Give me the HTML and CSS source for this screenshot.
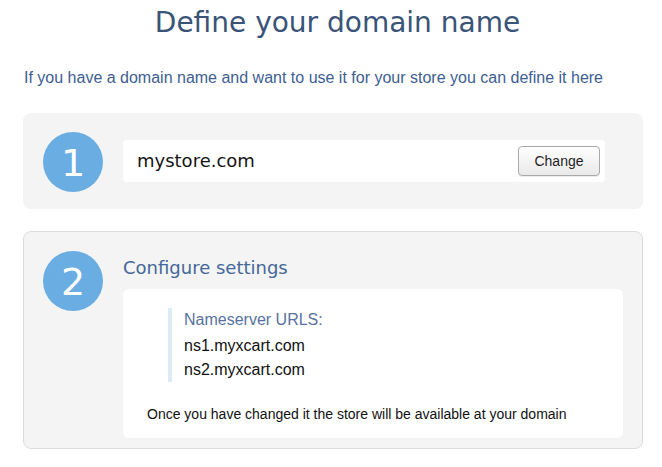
FILE: index.html
```html
<!DOCTYPE html>
<html lang="en">
<head>
<meta charset="utf-8">
<title>Define your domain name</title>
<link rel="stylesheet" href="styles.css">
</head>
<body>
<div class="page">
  <h1 class="title">Define your domain name</h1>
  <p class="lead">If you have a domain name and want to use it for your store you can define it here</p>

  <section class="step step-plain">
    <div class="num">1</div>
    <div class="domain">
      <span class="domain-name">mystore.com</span>
      <button class="btn" type="button">Change</button>
    </div>
  </section>

  <section class="step step-bordered">
    <div class="num">2</div>
    <div class="step-body">
      <h2 class="step-title">Configure settings</h2>
      <div class="panel">
        <div class="quote">
          <div class="quote-head">Nameserver URLS:</div>
          <div class="quote-line">ns1.myxcart.com</div>
          <div class="quote-line">ns2.myxcart.com</div>
        </div>
        <p class="note">Once you have changed it the store will be available at your domain</p>
      </div>
    </div>
  </section>
</div>
</body>
</html>
```

FILE: styles.css
```css
html, body {
  margin: 0;
  padding: 0;
  background: #ffffff;
}

.page {
  width: 620px;
  margin-left: 23px;
  font-family: "Liberation Sans", Arial, sans-serif;
}

.title {
  margin: 6px 0 0 0;
  padding-left: 9px;
  text-align: center;
  font-family: "DejaVu Sans", Verdana, sans-serif;
  font-weight: normal;
  font-size: 28px;
  line-height: 34px;
  color: #3a5478;
}

.lead {
  margin: 28px 0 0 1px;
  font-size: 16px;
  line-height: 20px;
  color: #3e5e92;
}

.step {
  display: flex;
  background: #f4f4f4;
  border-radius: 8px;
  box-sizing: border-box;
}

.step-plain {
  margin-top: 25px;
  height: 96px;
  padding: 0 38px 0 20px;
  align-items: center;
}

.step-bordered {
  margin-top: 22px;
  border: 1px solid #dcdcdc;
  padding: 19px 19px 10px 19px;
  align-items: flex-start;
}

.num {
  flex: 0 0 60px;
  width: 60px;
  height: 60px;
  border-radius: 50%;
  background: #6aade2;
  color: #ffffff;
  font-family: "DejaVu Sans", Verdana, sans-serif;
  font-size: 38px;
  line-height: 62px;
  text-align: center;
  margin-right: 20px;
}

.step-plain .num {
  margin-top: 1px;
}

.domain {
  flex: 1;
  display: flex;
  align-items: center;
  justify-content: space-between;
  height: 42px;
  background: #ffffff;
  border-radius: 4px;
  padding: 0 5px 0 14px;
}

.domain-name {
  font-family: "DejaVu Sans", Verdana, sans-serif;
  font-size: 18px;
  line-height: 42px;
  color: #141414;
}

.btn {
  width: 82px;
  height: 30px;
  padding: 0;
  border: 1px solid #a9a9a9;
  border-radius: 4px;
  background: linear-gradient(#ffffff, #e9e9e9);
  box-shadow: 0 1px 1px rgba(0, 0, 0, 0.08);
  font-family: "Liberation Sans", Arial, sans-serif;
  font-size: 14px;
  color: #1e1e1e;
}

.step-body {
  flex: 1;
}

.step-title {
  margin: 6px 0 10px 0;
  font-family: "DejaVu Sans", Verdana, sans-serif;
  font-weight: normal;
  font-size: 18px;
  line-height: 22px;
  color: #44689a;
}

.panel {
  background: #ffffff;
  border-radius: 6px;
  padding: 19px 20px 14px 24px;
}

.quote {
  margin-left: 21px;
  border-left: 4px solid #dfeaf8;
  padding-left: 12px;
  font-size: 16px;
  line-height: 24px;
  color: #111111;
}

.quote-head {
  color: #5772a0;
  margin-bottom: 2px;
}

.note {
  margin: 22px 0 0 0;
  font-size: 14px;
  line-height: 20px;
  color: #111111;
}
```
